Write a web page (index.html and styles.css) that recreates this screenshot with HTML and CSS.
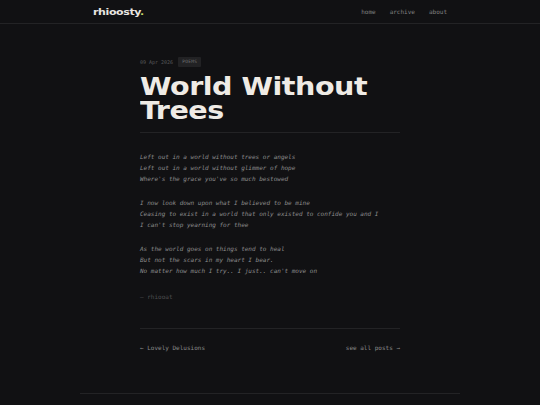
FILE: index.html
```html
<!DOCTYPE html>
<html>
<head>
<meta charset="utf-8">
<link rel="stylesheet" href="styles.css">
</head>
<body>
<header class="site-header">
  <div class="header-inner">
    <a class="logo" href="#">rhioosty<span class="dot">.</span></a>
    <nav class="nav">
      <a href="#">home</a>
      <a href="#">archive</a>
      <a href="#">about</a>
    </nav>
  </div>
</header>
<main class="post">
  <div class="meta">
    <span class="date">09 Apr 2026</span>
    <span class="tag">POEMS</span>
  </div>
  <h1 class="title"><span class="title-text">World Without Trees</span></h1>
  <hr class="rule">
  <div class="poem">
    <p class="stanza">Left out in a world without trees or angels<br>Left out in a world without glimmer of hope<br>Where's the grace you've so much bestowed</p>
    <p class="stanza">I now look down upon what I believed to be mine<br>Ceasing to exist in a world that only existed to confide you and I<br>I can't stop yearning for thee</p>
    <p class="stanza">As the world goes on things tend to heal<br>But not the scars in my heart I bear.<br>No matter how much I try.. I just.. can't move on</p>
    <p class="signature">— rhiooat</p>
  </div>
  <hr class="rule rule-bottom">
  <div class="post-nav">
    <a href="#">← Lovely Delusions</a>
    <a href="#">see all posts →</a>
  </div>
</main>
<footer class="site-footer"></footer>
</body>
</html>
```
FILE: styles.css
```css
html, body {
  margin: 0;
  padding: 0;
  background: #111113;
}
body {
  font-family: "DejaVu Sans Mono", "Liberation Mono", monospace;
  color: #8c8c8c;
  min-height: 405px;
}
a {
  color: inherit;
  text-decoration: none;
}
.site-header {
  height: 23px;
  border-bottom: 1px solid #232325;
}
.header-inner {
  width: 354px;
  height: 23px;
  margin: 0 auto;
  display: flex;
  justify-content: space-between;
  align-items: center;
}
.logo {
  font-family: "DejaVu Sans", sans-serif;
  font-weight: bold;
  font-size: 9px;
  color: #e8e6e1;
  letter-spacing: -0.3px;
  display: inline-block;
  transform: scaleX(1.22);
  transform-origin: left center;
}
.logo .dot {
  color: #c9db6a;
}
.nav {
  display: flex;
  gap: 14px;
  font-size: 6px;
  color: #808080;
}
.post {
  width: 260px;
  margin: 0 auto;
  padding-top: 33px;
}
.meta {
  display: flex;
  align-items: center;
  gap: 5px;
  height: 10px;
  font-size: 5px;
  color: #5a5a5c;
}
.tag {
  background: #222224;
  color: #707072;
  padding: 0 4px;
  height: 10px;
  line-height: 10px;
  border-radius: 1px;
  font-size: 4.5px;
  letter-spacing: 0.3px;
}
.title {
  margin: 8px 0 0;
  font-family: "DejaVu Sans", sans-serif;
  font-weight: bold;
  font-size: 24px;
  line-height: 24px;
  color: #efebe5;
  letter-spacing: -0.4px;
}
.title-text {
  display: inline-block;
  transform: scaleX(1.19);
  transform-origin: left top;
}
.rule {
  border: 0;
  border-top: 1px solid #232325;
  margin: 9px 0 0;
}
.poem {
  margin-top: 18px;
  font-style: italic;
  font-size: 6px;
  line-height: 11px;
  color: #8e8e8e;
}
.stanza {
  margin: 0 0 13px;
}
.signature {
  margin: 15px 0 0;
  color: #4e4e50;
  font-style: normal;
}
.rule-bottom {
  margin-top: 26px;
}
.post-nav {
  display: flex;
  justify-content: space-between;
  margin-top: 14px;
  font-size: 6px;
  line-height: 10px;
  color: #8a8a8a;
}
.site-footer {
  width: 380px;
  margin: 40px auto 0;
  border-top: 1px solid #232325;
}
```
